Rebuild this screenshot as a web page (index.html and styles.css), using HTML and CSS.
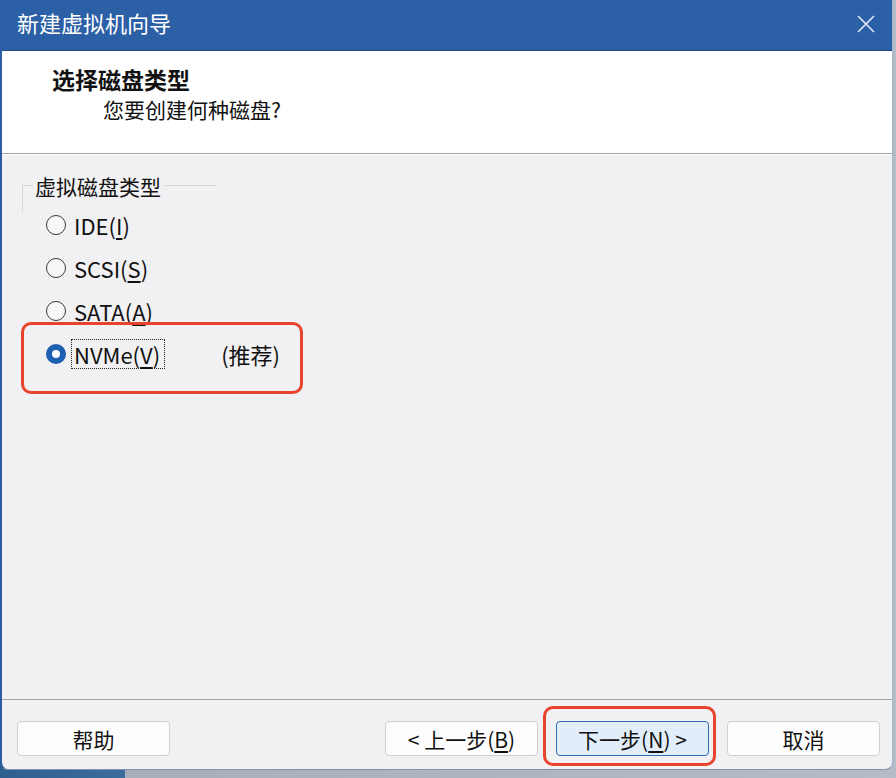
FILE: index.html
```html
<!DOCTYPE html>
<html lang="zh-CN">
<head>
<meta charset="utf-8">
<title>新建虚拟机向导</title>
<link rel="stylesheet" href="styles.css">
</head>
<body>
<div class="screen">
  <div class="window">
    <div class="titlebar">
      <span class="title">新建虚拟机向导</span>
      <svg class="close" width="18" height="18" viewBox="0 0 18 18"><path d="M1 1 L17 17 M17 1 L1 17" stroke="#e4edf8" stroke-width="1.6" fill="none"/></svg>
    </div>
    <div class="header">
      <div class="heading">选择磁盘类型</div>
      <div class="subheading">您要创建何种磁盘?</div>
    </div>
    <div class="content">
      <div class="group">
        <div class="legend">虚拟磁盘类型</div>
        <div class="row"><span class="radio"></span><span class="label">IDE(<u>I</u>)</span></div>
        <div class="row"><span class="radio"></span><span class="label">SCSI(<u>S</u>)</span></div>
        <div class="row"><span class="radio"></span><span class="label">SATA(<u>A</u>)</span></div>
        <div class="row"><span class="radio checked"></span><span class="label focus">NVMe(<u>V</u>)</span><span class="note">(推荐)</span></div>
      </div>
    </div>
    <div class="footer">
      <button class="btn">帮助</button>
      <div class="spacer"></div>
      <button class="btn">&lt; 上一步(<u>B</u>)</button>
      <button class="btn primary">下一步(<u>N</u>) &gt;</button>
      <button class="btn">取消</button>
    </div>
  </div>
  <div class="mark mark-radio"></div>
  <div class="mark mark-next"></div>
</div>
</body>
</html>
```
FILE: styles.css
```css
* { box-sizing: border-box; }
html, body { margin: 0; padding: 0; }
body {
  font-family: "Noto Sans CJK SC", "Noto Sans", sans-serif;
  color: #111;
}
.screen {
  position: relative;
  width: 896px;
  height: 778px;
  overflow: hidden;
  background: linear-gradient(90deg, #2f5f8f 0, #3a6c9c 125px, #a7afbb 125px, #b4bcc7 100%);
}
.window {
  width: 893px;
  height: 770px;
  display: flex;
  flex-direction: column;
  background: #f1f0f2;
  border-left: 2px solid #2a5da3;
  border-right: 1px solid #9fb3cc;
  border-bottom: 1px solid #7f95b3;
  border-bottom-left-radius: 8px;
  border-bottom-right-radius: 8px;
  overflow: hidden;
}
.titlebar {
  height: 51px;
  flex: none;
  display: flex;
  align-items: center;
  justify-content: space-between;
  background: #2b5fa6;
  border-bottom: 1px solid #1e4a86;
  padding: 0 17px 6px 15px;
}
.title {
  color: #fff;
  font-size: 22px;
  line-height: 28px;
}
.close { display: block; margin-top: 4px; }
.header {
  height: 103px;
  flex: none;
  background: #fff;
  border-bottom: 1px solid #a3a3a3;
  box-shadow: 0 1px 0 #fff;
  padding: 13px 0 0 50px;
}
.heading {
  font-size: 23px;
  font-weight: 700;
  line-height: 30px;
}
.subheading {
  font-size: 21px;
  line-height: 30px;
  margin-left: 51px;
}
.content {
  flex: 1;
  padding: 31px 0 0 20px;
}
.group {
  width: 194px;
  display: flex;
  flex-direction: column;
  border-top: 1px solid #d6d6d8;
  background: linear-gradient(#d6d6d8, #d6d6d8) left top / 1px 26px no-repeat;
}
.legend {
  width: max-content;
  margin: -14px 0 0 11px;
  padding: 0 3px 0 2px;
  background: #f1f0f2;
  font-size: 21px;
  line-height: 28px;
}
.row {
  height: 43px;
  flex: none;
  display: flex;
  align-items: center;
  padding-left: 24px;
  white-space: nowrap;
  font-size: 22px;
}
.legend + .row { margin-top: 3px; }
.radio {
  width: 20px;
  height: 20px;
  flex: none;
  border-radius: 50%;
  border: 1.5px solid #3a3a3a;
  background: #f7f7f7;
  margin-right: 5px;
}
.radio.checked {
  border: 6px solid #1d5fb0;
  background: #fff;
}
.label {
  padding: 0 2px;
  line-height: 28px;
  border: 1px dotted transparent;
}
.label.focus { padding: 0 4px 0 2px; border-color: #222; }
.note { margin-left: 56px; }
u { text-underline-offset: 3px; }
.footer {
  height: 70px;
  flex: none;
  display: flex;
  align-items: flex-start;
  gap: 18px;
  padding: 21px 12px 0 15px;
  border-top: 1px solid #a3a3a3;
}
.spacer { flex: 1; }
.btn {
  width: 153px;
  height: 35px;
  font-family: inherit;
  font-size: 21px;
  color: #111;
  background: #fdfdfd;
  border: 1px solid #cfcfd2;
  border-radius: 4px;
  padding: 0;
}
.btn.primary {
  background: #e1eefa;
  border-color: #2e6db4;
}
.mark {
  position: absolute;
  border: 3px solid #e8432c;
  border-radius: 10px;
}
.mark-radio { left: 21px; top: 322px; width: 282px; height: 72px; }
.mark-next { left: 543px; top: 706px; width: 173px; height: 60px; }
```
